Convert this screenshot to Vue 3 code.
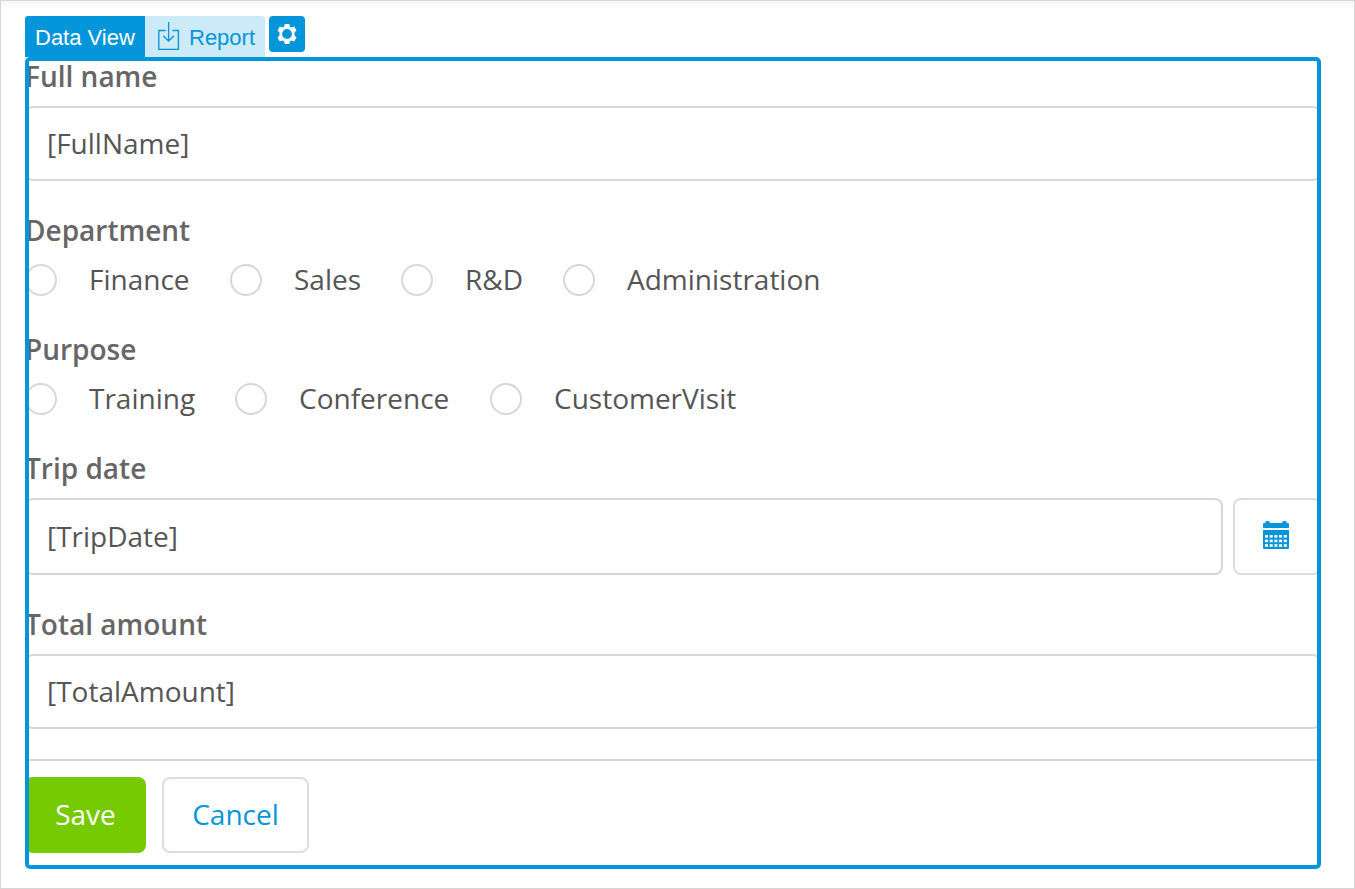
<script setup>
const departments = [
  { name: 'Finance', width: 205 },
  { name: 'Sales', width: 171 },
  { name: 'R&D', width: 162 },
  { name: 'Administration', width: 270 },
]
const purposes = [
  { name: 'Training', width: 210 },
  { name: 'Conference', width: 255 },
  { name: 'CustomerVisit', width: 260 },
]
const dayColumns = [0, 1, 2, 3, 4]
const dayRows = [0, 1, 2]
</script>

<template>
  <main class="page">
    <header class="tabs">
      <div class="tab tab-view">Data View</div>
      <div class="tab tab-report">
        <svg class="report-icon" width="22" height="28" viewBox="0 0 22 28" fill="none" stroke="#0595db" stroke-width="1.3">
          <path d="M7.5 8.5H.8V27.3H20.4V8.5H14.5" />
          <path d="M10.6 0V19M5.2 13.8L10.6 19L16 13.8" />
        </svg>
        <span>Report</span>
      </div>
      <button class="settings" aria-label="Settings">
        <svg width="20" height="20" viewBox="0 0 20 20">
          <path
            fill="#fff"
            fill-rule="evenodd"
            d="M7.7 0h4.6l.6 2.7 1.5.8 2.8-.9 2.3 4-2 1.9v3l2 1.9-2.3 4-2.8-.9-1.5.8-.6 2.7H7.7l-.6-2.7-1.5-.8-2.8.9-2.3-4 2-1.9v-3l-2-1.9 2.3-4 2.8.9 1.5-.8zM10 5.1a4.9 4.9 0 1 0 0 9.8a4.9 4.9 0 1 0 0-9.8z"
          />
        </svg>
      </button>
    </header>

    <form class="form" @submit.prevent>
      <div class="label first">Full name</div>
      <div class="input">[FullName]</div>

      <div class="label department">Department</div>
      <div class="options">
        <div v-for="d in departments" :key="d.name" class="option" :style="{ width: d.width + 'px' }">
          <span class="radio"></span><span class="option-text">{{ d.name }}</span>
        </div>
      </div>

      <div class="label grouped">Purpose</div>
      <div class="options">
        <div v-for="p in purposes" :key="p.name" class="option" :style="{ width: p.width + 'px' }">
          <span class="radio"></span><span class="option-text">{{ p.name }}</span>
        </div>
      </div>

      <div class="label grouped">Trip date</div>
      <div class="date-row">
        <div class="input date">[TripDate]</div>
        <button class="calendar" aria-label="Pick a date">
          <svg width="26" height="28" viewBox="0 0 26 28">
            <path fill="#0595db" d="M0 3Q0 2 1 2H2L3 0H6L7 2H19L20 0H23L24 2H25Q26 2 26 3V7H0ZM0 9H26V27Q26 28 25 28H1Q0 28 0 27Z" />
            <g fill="#fff">
              <template v-for="r in dayRows" :key="r">
                <rect v-for="c in dayColumns" :key="c" :x="2 + c * 4.7" :y="14 + r * 4.6" width="3" height="2.6" />
              </template>
            </g>
          </svg>
        </button>
      </div>

      <div class="label total">Total amount</div>
      <div class="input">[TotalAmount]</div>

      <footer class="actions">
        <button class="btn save">Save</button>
        <button class="btn cancel">Cancel</button>
      </footer>
      <div class="selection"></div>
    </form>
  </main>
</template>

<style>
body {
  background: #fff;
}
</style>

<style scoped>
.page {
  box-sizing: border-box;
  width: 1355px;
  height: 889px;
  padding: 15px 33px 0 24px;
  overflow: hidden;
  border: 1px solid #d6d6d6;
  background: linear-gradient(#f5f5f5, #fff 8px);
  font-family: "Open Sans", "Noto Sans", sans-serif;
  font-size: 28px;
  line-height: 36px;
  color: #555;
}
.tabs {
  display: flex;
  align-items: flex-start;
  height: 41px;
  font-family: "Liberation Sans", Arial, sans-serif;
  font-size: 22px;
  line-height: 44px;
}
.tab {
  box-sizing: border-box;
  width: 120px;
  height: 41px;
  white-space: nowrap;
}
.tab-view {
  padding-left: 10px;
  border-radius: 3px 0 0 0;
  background: #0595db;
  color: #fff;
}
.tab-report {
  display: flex;
  gap: 9px;
  padding-left: 13px;
  border-radius: 0 3px 0 0;
  background: #cdeaf8;
  color: #0595db;
}
.report-icon {
  margin-top: 6px;
}
.settings {
  display: flex;
  align-items: center;
  justify-content: center;
  width: 36px;
  height: 36px;
  margin-left: 4px;
  padding: 0;
  border: 0;
  border-radius: 4px;
  background: #0595db;
}
.form {
  position: relative;
  width: 1296px;
  height: 812px;
}
.selection {
  position: absolute;
  inset: 0;
  box-sizing: border-box;
  border: 4px solid #0595db;
  border-radius: 5px;
  pointer-events: none;
}
.label {
  height: 38px;
  font-weight: 600;
  color: #666;
}
.label.first {
  padding-top: 1px;
  margin-bottom: 10px;
}
.label.department {
  margin: 31px 0 14px;
}
.label.grouped {
  margin: 35px 0 14px;
}
.label.total {
  margin: 31px 0 10px;
}
.input {
  box-sizing: border-box;
  height: 75px;
  padding: 17px 20px;
  border: 2px solid #d7d7d7;
  border-radius: 8px;
  background: #fff;
}
.options {
  display: flex;
  height: 32px;
}
.option {
  display: flex;
  align-items: center;
  gap: 32px;
}
.option-text {
  padding-bottom: 2px;
}
.radio {
  box-sizing: border-box;
  flex: none;
  width: 32px;
  height: 32px;
  border: 2px solid #d7d7d7;
  border-radius: 50%;
}
.date-row {
  display: flex;
  gap: 10px;
  margin-top: -4px;
}
.date {
  width: 1198px;
  height: 77px;
  padding-top: 18px;
}
.calendar {
  display: flex;
  justify-content: center;
  width: 88px;
  height: 77px;
  box-sizing: border-box;
  padding: 21px 2px 0 0;
  border: 2px solid #ddd;
  border-radius: 8px;
  background: #fff;
}
.actions {
  display: flex;
  gap: 16px;
  margin-top: 30px;
  padding-top: 16px;
  border-top: 2px solid #d7d7d7;
}
.btn {
  box-sizing: border-box;
  height: 76px;
  padding: 0 0 2px;
  border-radius: 8px;
  font: inherit;
}
.save {
  width: 121px;
  border: 0;
  background: #76ca02;
  color: #fff;
}
.cancel {
  width: 147px;
  border: 2px solid #ddd;
  background: #fff;
  color: #0595db;
}
</style>
